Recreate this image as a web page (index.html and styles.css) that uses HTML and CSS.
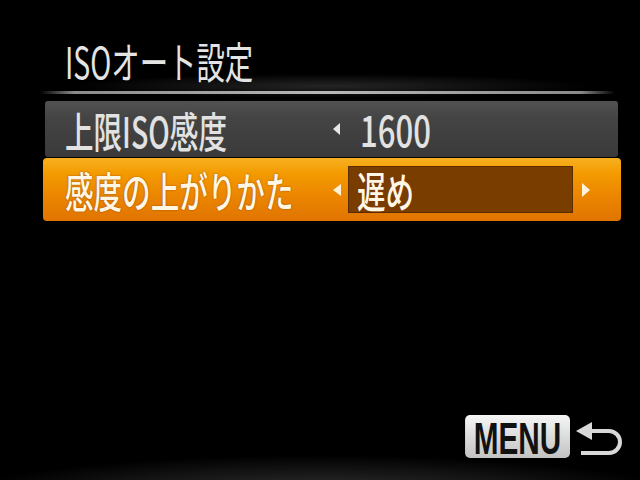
FILE: index.html
```html
<!DOCTYPE html>
<html lang="ja">
<head>
<meta charset="utf-8">
<title>ISOオート設定</title>
<link rel="stylesheet" href="styles.css">
</head>
<body>
<div class="screen">
  <div class="title"><span class="cond-title">ISOオート設定</span></div>
  <div class="sep"></div>
  <div class="menu-list">
    <div class="row normal">
      <div class="label"><span class="cond">上限ISO感度</span></div>
      <span class="arr-left"></span>
      <div class="value"><span class="cond">1600</span></div>
    </div>
    <div class="row active">
      <div class="label"><span class="cond">感度の上がりかた</span></div>
      <span class="arr-left"></span>
      <div class="value-box"><span class="cond">遅め</span></div>
      <span class="arr-right"></span>
    </div>
  </div>
  <div class="footer">
    <div class="menu-btn"><span class="menu-text">MENU</span></div>
    <svg class="return-icon" width="50" height="40" viewBox="0 0 50 40">
      <polygon points="3,14 19,5 19,23" fill="#d8d8d8"/>
      <path d="M17 14 H36 A11 11 0 0 1 36 36 H8" fill="none" stroke="#d8d8d8" stroke-width="4"/>
    </svg>
  </div>
</div>
</body>
</html>
```
FILE: styles.css
```css
html, body {
  margin: 0;
  padding: 0;
  background: #000;
}
.screen {
  width: 640px;
  height: 480px;
  overflow: hidden;
  display: flex;
  flex-direction: column;
  font-family: "Noto Sans CJK JP", "Noto Sans", sans-serif;
  background:
    radial-gradient(ellipse 260px 12px at 330px 86px, rgba(80,80,80,0.45), rgba(0,0,0,0) 100%),
    radial-gradient(ellipse 360px 42px at 320px 497px, rgba(60,60,60,0.9), rgba(0,0,0,0) 100%),
    #000;
}
.title {
  margin-top: 33px;
  height: 54px;
  line-height: 54px;
  padding-left: 65px;
  font-size: 43px;
  color: #e4e4e4;
  white-space: nowrap;
}
.cond-title {
  display: inline-block;
  transform: scaleX(0.66);
  transform-origin: left center;
}
.sep {
  margin: 4px 25px 0 40px;
  height: 3px;
  background: linear-gradient(90deg, rgba(120,120,120,0), #8a8a8a 6%, #b8b8b8 50%, #8a8a8a 94%, rgba(120,120,120,0));
}
.menu-list {
  margin-top: 7px;
  display: flex;
  flex-direction: column;
  gap: 1px;
}
.row {
  display: flex;
  align-items: center;
  box-sizing: border-box;
  font-size: 42px;
  font-weight: 500;
  white-space: nowrap;
}
.row.normal {
  margin-left: 45px;
  width: 573px;
  height: 56px;
  padding-left: 20px;
  border-radius: 3px;
  background: linear-gradient(#525252, #444 30%, #3a3a3a);
  color: #e2e2e2;
}
.row.active {
  margin-left: 43px;
  width: 578px;
  height: 63px;
  padding-left: 22px;
  border-radius: 4px;
  background: linear-gradient(#f7b020, #f39a00 25%, #ec8600 60%, #e07400);
  color: #fff6e4;
}
.label {
  flex: 0 0 268px;
  min-width: 0;
  width: 268px;
  height: 100%;
  display: flex;
  align-items: center;
}
.cond {
  display: inline-block;
  transform: scaleX(0.68);
  transform-origin: left center;
}
.active .cond {
  text-shadow: 0 0 2px rgba(120,50,0,0.85);
}
.arr-left {
  width: 0;
  height: 0;
  border-top: 6px solid transparent;
  border-bottom: 6px solid transparent;
  border-right: 7px solid #e8e8e8;
  flex: 0 0 auto;
}
.active .arr-left {
  border-top-width: 6px;
  border-bottom-width: 6px;
  border-right: 8px solid #fff3dc;
}
.arr-right {
  width: 0;
  height: 0;
  border-top: 7px solid transparent;
  border-bottom: 7px solid transparent;
  border-left: 8px solid #fff3dc;
  margin-left: 9px;
  flex: 0 0 auto;
}
.value {
  margin-left: 20px;
  font-size: 42px;
  line-height: 1;
}
.value .cond {
  transform: scaleX(0.74);
}
.value-box {
  margin-left: 7px;
  width: 225px;
  flex: 0 0 225px;
  height: 47px;
  box-sizing: border-box;
  background: #7a3d00;
  border: 1px solid #5a2a00;
  padding-left: 8px;
  display: flex;
  align-items: center;
  font-size: 42px;
}
.footer {
  margin-top: auto;
  margin-bottom: 22px;
  display: flex;
  justify-content: flex-end;
  align-items: center;
  padding-right: 17px;
}
.menu-btn {
  width: 159px;
  height: 43px;
  border-radius: 7.5px / 5px;
  background: linear-gradient(#f6f6f6, #dcdcdc 50%, #c2c2c2);
  display: flex;
  justify-content: center;
  align-items: center;
  transform: scaleX(0.66);
  transform-origin: right center;
}
.menu-text {
  font-family: "Liberation Sans", Arial, sans-serif;
  font-weight: bold;
  font-size: 45px;
  line-height: 43px;
  color: #111;
  padding-top: 3px;
}
.return-icon {
  margin-left: 3px;
  display: block;
}
```
